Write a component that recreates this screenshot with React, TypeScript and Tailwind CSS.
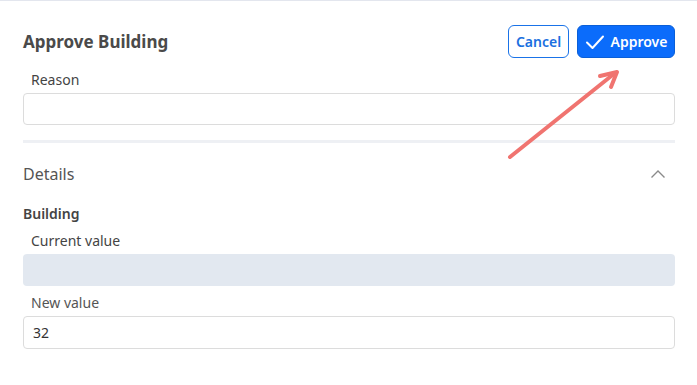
import React from "react";

export default function App() {
  return (
    <div className="relative w-[697px] h-[385px] bg-white overflow-hidden" style={{ fontFamily: '"Noto Sans", "Open Sans", sans-serif' }}>
      <div className="h-px bg-[#e3e6ee]" />
      <div className="pl-[23px] pr-[22px] pt-[24px]">
        <div className="flex items-center justify-between h-[33px]">
          <h1 className="text-[17px] font-bold text-[#4a4a4a] leading-none">Approve Building</h1>
          <div className="flex gap-[8px]">
            <button className="h-[33px] w-[61px] rounded-[6px] border border-[#1a73e8] text-[#1a6fe0] text-[14px] font-semibold bg-white">Cancel</button>
            <button className="h-[33px] w-[98px] rounded-[6px] bg-[#0b6cfb] border border-[#0a5fd8] text-white text-[14px] font-semibold flex items-center justify-center gap-[6px]">
              <svg width="20" height="16" viewBox="0 0 20 16" fill="none">
                <path d="M2 8.5 L7.5 14 L18 2.5" stroke="white" strokeWidth="2" strokeLinecap="round" strokeLinejoin="round" />
              </svg>
              Approve
            </button>
          </div>
        </div>
        <div className="mt-[12px] pl-[8px] text-[14px] text-[#444] leading-[20px]">Reason</div>
        <div className="mt-[3px] h-[32px] rounded-[4px] border border-[#dcdcdc]" />
        <div className="mt-[15px] h-[3px] bg-[#eef0f4]" />
        <div className="mt-[20px] flex items-center justify-between h-[22px]">
          <div className="text-[16px] text-[#555] leading-none">Details</div>
          <svg width="16" height="10" viewBox="0 0 16 10" className="mr-[9px]" fill="none">
            <path d="M1.5 8.5 L8 2 L14.5 8.5" stroke="#8a8a8a" strokeWidth="1.4" />
          </svg>
        </div>
        <div className="mt-[19px] text-[14px] font-semibold text-[#444] leading-[20px]">Building</div>
        <div className="mt-[7px] pl-[8px] text-[14px] text-[#444] leading-[20px]">Current value</div>
        <div className="mt-[3px] h-[32px] rounded-[4px] bg-[#e2e8f0]" />
        <div className="mt-[7px] pl-[8px] text-[14px] text-[#555] leading-[20px]">New value</div>
        <div className="mt-[3px] h-[33px] rounded-[4px] border border-[#dcdcdc] flex items-center pl-[9px] text-[14px] text-[#333]">32</div>
      </div>
      <svg className="absolute left-0 top-0 pointer-events-none" width="697" height="385">
        <line x1="510" y1="157" x2="615" y2="73" stroke="#f07470" strokeWidth="4" strokeLinecap="round" />
        <path d="M600 76 L617 72 L611 87" stroke="#f07470" strokeWidth="4" strokeLinecap="round" strokeLinejoin="round" fill="none" />
      </svg>
    </div>
  );
}
